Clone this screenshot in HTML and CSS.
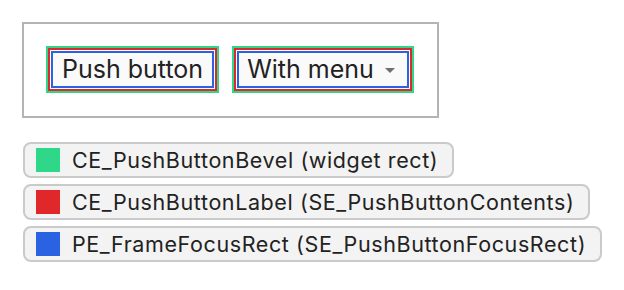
FILE: index.html
```html
<!DOCTYPE html>
<html>
<head>
<meta charset="utf-8">
<link rel="stylesheet" href="styles.css">
</head>
<body>
<div class="page">
  <div class="frame">
    <div class="bevel">
      <div class="label">
        <div class="focus push">Push button</div>
      </div>
    </div>
    <div class="bevel">
      <div class="label">
        <div class="focus menu"><span>With menu</span><span class="arrow"></span></div>
      </div>
    </div>
  </div>
  <div class="legend">
    <div class="pill"><span class="swatch green"></span><span class="text">CE_PushButtonBevel (widget rect)</span></div>
    <div class="pill"><span class="swatch red"></span><span class="text">CE_PushButtonLabel (SE_PushButtonContents)</span></div>
    <div class="pill"><span class="swatch blue"></span><span class="text">PE_FrameFocusRect (SE_PushButtonFocusRect)</span></div>
  </div>
</div>
</body>
</html>
```

FILE: styles.css
```css
html, body {
  margin: 0;
  padding: 0;
  background: #ffffff;
}
body {
  font-family: Inter, "Liberation Sans", Arial, sans-serif;
  color: #222222;
}
.page {
  padding: 22px 0 0 22px;
  display: flex;
  flex-direction: column;
  align-items: flex-start;
}
.frame {
  display: flex;
  align-items: center;
  gap: 13px;
  border: 2px solid #b4b4b4;
  padding: 22px 23px 23px 22px;
}
.bevel {
  border: 2px solid #2fd888;
}
.label {
  border: 2px solid #e0282a;
  padding: 1px;
  background: #ffffff;
}
.focus {
  border: 2px solid #2b62e2;
  background: #fafafa;
  height: 33px;
  line-height: 33px;
  font-size: 25px;
  display: flex;
  align-items: center;
}
.push {
  padding: 0 9px;
}
.menu {
  padding: 0 12px 0 8px;
  gap: 11px;
}
.arrow {
  width: 0;
  height: 0;
  border-left: 5px solid transparent;
  border-right: 5px solid transparent;
  border-top: 5px solid #6f6f6f;
  margin-top: 2px;
}
.legend {
  margin-top: 24px;
  margin-left: 1px;
  display: flex;
  flex-direction: column;
  align-items: flex-start;
  gap: 6px;
}
.pill {
  display: flex;
  align-items: center;
  gap: 12px;
  height: 32px;
  border: 2px solid #cacaca;
  border-radius: 8px;
  background: #f3f3f3;
  padding: 0 14px 0 11px;
  font-size: 21.5px;
  letter-spacing: 0.6px;
}
.swatch {
  width: 24px;
  height: 24px;
  flex: none;
}
.green { background: #2fd888; }
.red { background: #e0282a; }
.blue { background: #2b62e2; }
```
